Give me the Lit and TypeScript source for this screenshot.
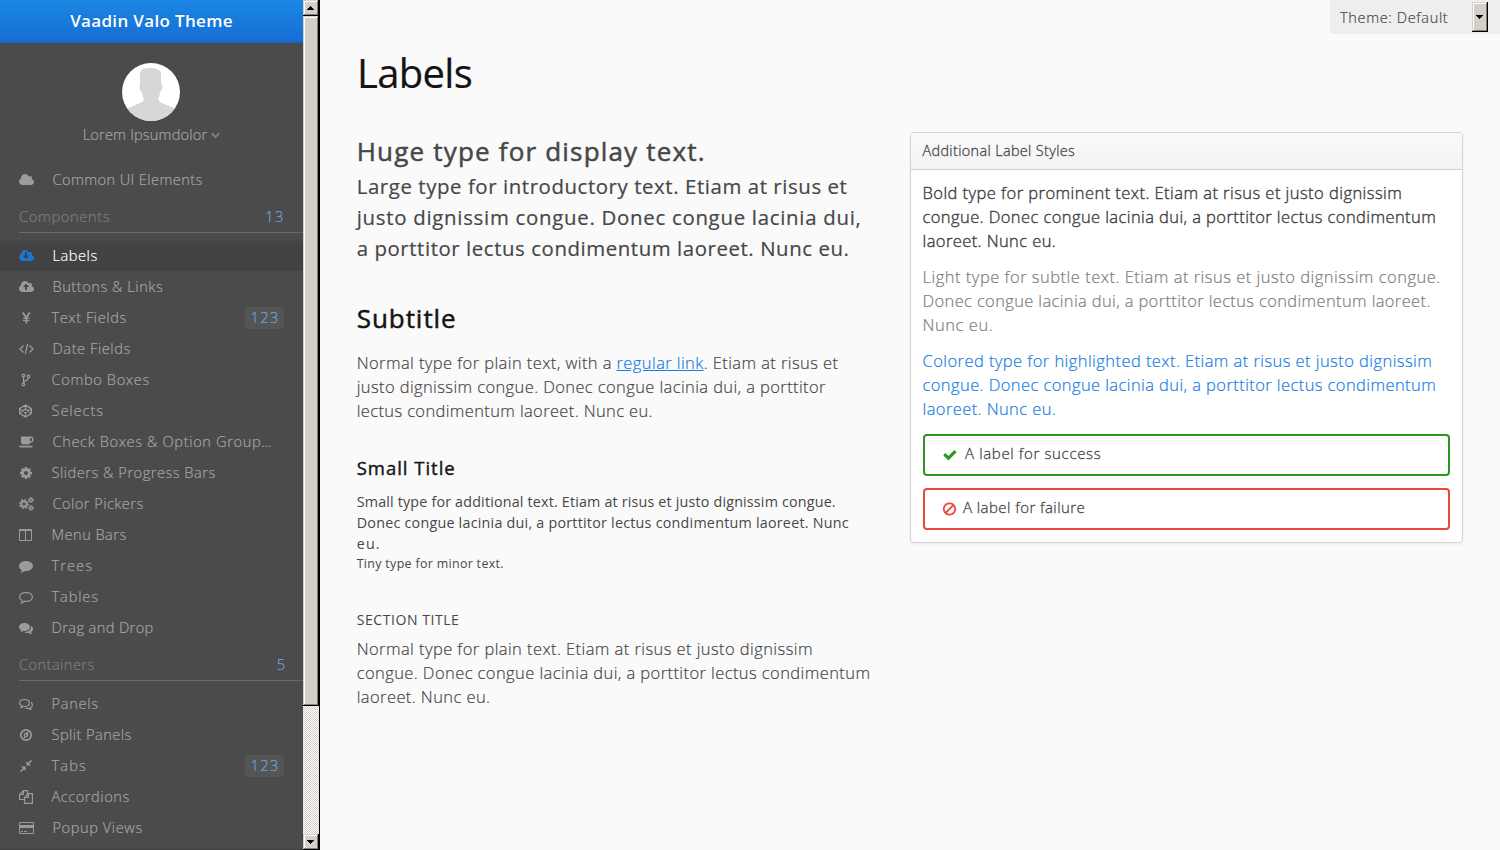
import { LitElement, html, css, svg } from "lit";
import { customElement, property, state } from "lit/decorators.js";
import { classMap } from "lit/directives/class-map.js";

/* One line of text tracked so that it fills the given measure. */
@customElement("text-line")
class TextLine extends LitElement {
  @property({ type: Number }) measure = 0;
  @state() private tracking = 0;
  static styles = css`
    :host { display: block; white-space: nowrap; }
  `;
  firstUpdated() {
    const box = this.renderRoot.querySelector("span")!;
    const chars = (this.textContent || "").trim().length;
    const natural = box.getBoundingClientRect().width;
    if (this.measure && chars > 1) this.tracking = (this.measure - natural) / (chars - 0.5);
  }
  render() {
    return html`<span style="letter-spacing:${this.tracking.toFixed(3)}px"><slot></slot></span>`;
  }
}

const fa = (d: string, dx = 0) =>
  svg`<g transform="translate(${dx} 0) scale(0.0078125)"><path d="${d}" fill="currentColor"/></g>`;
const CLOUD_BODY = "q0 159-112.5 271.5t-271.5 112.5h-1088q-185 0-316.5-131.5t-131.5-316.5q0-130 70-240t188-165q-2-30-2-43 0-212 150-362t362-150q156 0 285.5 87t188.5 231q71-62 166-62 106 0 181 75t75 181q0 76-41 138 130 31 213.5 135.5t83.5 238.5z";
const COG = "M1152 896q0-106-75-181t-181-75-181 75-75 181 75 181 181 75 181-75 75-181zm512-109v222q0 12-8 23t-20 13l-185 28q-19 54-39 91 35 50 107 138 10 12 10 25t-9 23q-27 37-99 108t-94 71q-12 0-26-9l-138-108q-44 23-91 38-16 136-29 186-7 28-36 28h-222q-14 0-24.5-8.5t-11.5-21.5l-28-184q-49-16-90-37l-141 107q-10 9-25 9-14 0-25-11-126-114-165-168-7-10-7-23 0-12 8-23 15-21 51-66.5t54-70.5q-27-50-41-99l-183-27q-13-2-21-12.5t-8-23.5v-222q0-12 8-23t19-13l186-28q14-46 39-92-40-57-107-138-10-12-10-24 0-10 9-23 26-36 98.5-107.5t94.5-71.5q13 0 26 10l138 107q44-23 91-38 16-136 29-186 7-28 36-28h222q14 0 24.5 8.5t11.5 21.5l28 184q49 16 90 37l142-107q9-9 24-9 13 0 25 10 129 119 165 170 7 8 7 22 0 12-8 23-15 21-51 66.5t-54 70.5q26 50 41 98l183 28q13 2 21 12.5t8 23.5z";
const CHECK = "M1671 566q0 40-28 68l-724 724-136 136q-28 28-68 28t-68-28l-136-136-362-362q-28-28-28-68t28-68l136-136q28-28 68-28t68 28l294 295 656-657q28-28 68-28t68 28l136 136q28 28 28 68z";

const ICONS: Record<string, unknown> = {
  cloud: fa("M1984 1152" + CLOUD_BODY, -0.5),
  cloudDown: fa("M1344 864q0-14-9-23t-23-9h-224v-352q0-13-9.500-22.500t-22.500-9.500h-192q-13 0-22.500 9.500t-9.500 22.500v352h-224q-13 0-22.500 9.500t-9.500 22.500q0 14 9 23l352 352q9 9 23 9t23-9l351-351q10-12 10-24zm640 288" + CLOUD_BODY, -0.5),
  cloudUp: fa("M1344 864q0-14-9-23l-352-352q-9-9-23-9t-23 9l-351 351q-10 12-10 24 0 14 9 23t23 9h224v352q0 13 9.5 22.5t22.5 9.5h192q13 0 22.5-9.5t9.5-22.5v-352h224q13 0 22.5-9.5t9.5-22.5zm640 288" + CLOUD_BODY, -0.5),
  yen: svg`<g class="s w18"><path d="M3.800 1.500L7.250 7L10.700 1.500M7.250 7V12.500"/><path class="w1" d="M4 7.500H10.500M4 9.500H10.500"/></g>`,
  code: svg`<g class="s w12"><path d="M4.500 3.500L1 7L4.500 10.500M10.500 3.500L14 7L10.500 10.500M8.700 2L6.300 12"/></g>`,
  fork: svg`<g class="s w12"><circle cx="4.500" cy="2.500" r="1.300"/><circle cx="4.500" cy="11.500" r="1.300"/><circle cx="9.500" cy="3.500" r="1.300"/><path d="M4.500 4V10M9.500 5C9.500 7.800 4.800 7 4.600 9.800"/></g>`,
  codepen: svg`<g class="s w12"><path d="M6.500 .9L12.400 4.700V9.300L6.500 13.100L.6 9.300V4.700ZM.6 4.700L6.500 8.900L12.400 4.700M.6 9.300L6.500 5.100L12.400 9.300M6.500 .9V5.100M6.500 8.900V13.100"/></g>`,
  coffee: svg`<path fill="currentColor" fill-rule="evenodd" d="M2 1.500H11.500A3 3 0 0 1 11.500 7.700H11A2 2 0 0 1 9 9.500H4.500A2.500 2.500 0 0 1 2 7ZM11 3V6.200H11.500A1.500 1.500 0 0 0 11.500 3ZM0 10.800H14A2.500 1.800 0 0 1 12.500 12.500H1.500A2.500 1.800 0 0 1 0 10.800Z"/>`,
  cog: fa(COG),
  cogs: svg`<g fill="none" stroke="currentColor"><circle cx="5" cy="7" r="2.700" stroke-width="1.900"/><circle cx="5" cy="7" r="4.300" stroke-width="1.500" stroke-dasharray="1.700 1.677"/><circle cx="12" cy="3" r="1.500" stroke-width="1.300"/><circle cx="12" cy="3" r="2.500" stroke-width=".9" stroke-dasharray="1 .963"/><circle cx="12" cy="11" r="1.500" stroke-width="1.300"/><circle cx="12" cy="11" r="2.500" stroke-width=".9" stroke-dasharray="1 .963"/></g>`,
  columns: svg`<path fill="currentColor" fill-rule="evenodd" d="M1 1H12A1 1 0 0 1 13 2V12A1 1 0 0 1 12 13H1A1 1 0 0 1 0 12V2A1 1 0 0 1 1 1ZM1 3V12H6V3ZM7 3V12H12V3Z"/>`,
  comment: svg`<path fill="currentColor" d="M7 2C11 2 14 4.200 14 7S11 12 7 12L5.800 11.900C4.500 13 3 13.500 1.300 13.600C2 13 2.600 12.300 2.700 11C1 10 0 8.600 0 7C0 4.200 3 2 7 2Z"/>`,
  commentO: svg`<path class="s w12" d="M7 2.600C10.700 2.600 13.400 4.500 13.400 7S10.700 11.400 7 11.400L5.800 11.300C4.700 12.300 3.600 12.700 2.400 13C3 12.300 3.300 11.600 3.300 10.700C1.500 9.800 .6 8.500 .6 7C.6 4.500 3.300 2.600 7 2.600Z"/>`,
  comments: svg`<g fill="currentColor"><path d="M5.500 2C8.600 2 11 3.800 11 6S8.600 10 5.500 10L4.500 9.900C3.500 10.700 2.400 11 1.200 11C1.700 10.500 2 10 2.100 9.200C.8 8.400 0 7.300 0 6C0 3.800 2.400 2 5.500 2Z"/><path d="M12 4.800C13.200 5.500 14 6.600 14 7.900C14 9.200 13.200 10.300 12 11C12.100 11.800 12.500 12.400 13 13C11.500 13 10.400 12.500 9.500 11.900C7.800 12.100 6.300 11.800 5.200 11.100C9 11.100 12 9 12 6Z"/></g>`,
  commentsO: svg`<path class="s w12" d="M5.500 2.500C8.300 2.500 10.400 4 10.400 6S8.300 9.500 5.500 9.500L4.400 9.400C3.500 10 2.800 10.300 2 10.400C2.400 9.900 2.600 9.500 2.700 8.900C1.300 8.200 .6 7.200 .6 6C.6 4 2.700 2.500 5.500 2.500Z"/><path fill="currentColor" d="M12 4.800C13.200 5.500 14 6.600 14 7.900C14 9.200 13.200 10.300 12 11C12.100 11.800 12.500 12.400 13 13C11.500 13 10.400 12.500 9.500 11.900C7.800 12.100 6.300 11.800 5.200 11.100L7.500 10.800C10.500 11.500 13 9.800 12.800 7.800C12.700 6.800 12.200 6.300 11.700 5.900Z"/>`,
  compass: svg`<circle class="s" cx="7" cy="7" r="5.200" stroke-width="1.700"/><path fill="currentColor" fill-rule="evenodd" d="M9.200 3.500V8.200L4.800 10.500V5.800ZM6 6.500V8.800L7.300 8V5.900Z"/>`,
  compress: svg`<path fill="currentColor" d="M7.500 6.600V2L9.200 3.700L12 .9L13.100 2L10.300 4.800L12 6.600ZM6.600 7.500V12L4.900 10.300L2.100 13.100L1 12L3.800 9.200L2 7.500Z"/>`,
  copy: svg`<g class="s w12"><path d="M5.500 9.500H.6V4.500L4.500 .6H8.500V3.800M4.500 .6V4.500H.6M5.500 7.500L9.400 3.600H13.400V13.400H5.500ZM9.400 3.600V7.500H5.500"/></g>`,
  card: svg`<path fill="currentColor" fill-rule="evenodd" d="M1 1H14A1 1 0 0 1 15 2V12A1 1 0 0 1 14 13H1A1 1 0 0 1 0 12V2A1 1 0 0 1 1 1ZM1 2V4H14V2ZM1 7V12H14V7ZM2 10H4V11H2ZM5 10H8V11H5Z"/>`,
};
const icon = (name: string) =>
  html`<svg class="icon" width="16" height="14" viewBox="0 0 16 14">${ICONS[name]}</svg>`;

interface Item { icon: string; label: string; end: number; x?: number; badge?: string }
const COMPONENTS: Item[] = [
  { icon: "cloudDown", label: "Labels", end: 97, x: 53 },
  { icon: "cloudUp", label: "Buttons & Links", end: 162.5, x: 53 },
  { icon: "yen", label: "Text Fields", end: 126, badge: "123" },
  { icon: "code", label: "Date Fields", end: 130, x: 53 },
  { icon: "fork", label: "Combo Boxes", end: 149 },
  { icon: "codepen", label: "Selects", end: 103 },
  { icon: "coffee", label: "Check Boxes & Option Group…", end: 271.5, x: 53 },
  { icon: "cog", label: "Sliders & Progress Bars", end: 215 },
  { icon: "cogs", label: "Color Pickers", end: 143, x: 53 },
  { icon: "columns", label: "Menu Bars", end: 126 },
  { icon: "comment", label: "Trees", end: 92 },
  { icon: "commentO", label: "Tables", end: 98 },
  { icon: "comments", label: "Drag and Drop", end: 153 },
];
const CONTAINERS: Item[] = [
  { icon: "commentsO", label: "Panels", end: 98 },
  { icon: "compass", label: "Split Panels", end: 131 },
  { icon: "compress", label: "Tabs", end: 86, badge: "123" },
  { icon: "copy", label: "Accordions", end: 129 },
  { icon: "card", label: "Popup Views", end: 142, x: 53 },
];

@customElement("app-root")
class AppRoot extends LitElement {
  @state() private selected = "Labels";
  static styles = css`
    :host {
      display: flex; height: 850px; overflow: hidden; position: relative; background: #fafafa;
      font: 300 16.500px/24px "Open Sans", sans-serif; color: #474747; -webkit-text-stroke: .2px;
    }
    * { box-sizing: border-box; }
    h1, h2, h3, h4, p { margin: 0; }
    .s { fill: none; stroke: currentColor; }
    .w12 { stroke-width: 1.2; } .w18 { stroke-width: 1.8; } .w1 { stroke-width: 1.1; }
    .icon { display: block; flex: none; overflow: visible; }

    .menu { width: 303px; height: 850px; flex: none; overflow: hidden; background: #4b4b4b;
      color: #a5a5a5; font-size: 14.600px; box-shadow: inset 0 -2px 2px -1px #3c3c3c; }
    .brand { height: 43px; display: flex; justify-content: center; background: linear-gradient(#1b87e3, #166dd5);
      border-bottom: 1px solid #1362bb; color: #fff; font: 600 17px/42px "Open Sans", sans-serif;
      text-shadow: 0 -1px 0 rgba(0,0,0,.1); -webkit-text-stroke: 0; }
    .user { height: 121px; padding-top: 20px; display: flex; flex-direction: column; align-items: center; }
    .avatar { width: 58px; height: 58px; border-radius: 50%; overflow: hidden; background: #fff; display: block; margin-right: 1px; }
    .name { display: flex; align-items: center; line-height: 26px; gap: 4px; }
    .name svg { margin-top: 2px; color: #7d7d7d; }
    .item { height: 31px; display: flex; align-items: center; padding: 0 19px; line-height: 31px; cursor: pointer; }
    .item .icon { color: #9b9b9b; margin-right: 16.500px; }
    .item.wide .icon { margin-right: 17.500px; }
    .item.on { background: linear-gradient(#464646, #424242 20%, #424242); color: #fff; }
    .item.on .icon { color: #1d76d3; }
    .badge { margin-left: auto; width: 39px; height: 22px; border-radius: 4px; background: #555; color: #6fa5dc;
      line-height: 21px; padding-left: 5.500px; }
    .group { height: 38px; margin: 0 0 7px 19px; padding: 6px 18px 0 0; border-bottom: 1px solid #6a6a6a;
      display: flex; justify-content: space-between; color: #7e7e7e; line-height: 31px; }
    .group .count { color: #6fa5dc; }

    .scroll { width: 17px; height: 850px; flex: none; display: flex; flex-direction: column; border-right: 1px solid #000;
      background: repeating-conic-gradient(#d4d0c8 0 25%, #fff 0 50%) 0 0 / 2px 2px; }
    .knob { background: #d4d0c8; height: 16px; display: flex; align-items: center; justify-content: center;
      box-shadow: inset -1px -1px #000, inset 1px 1px #d4d0c8, inset -2px -2px #808080, inset 2px 2px #fff; }
    .thumb { height: 690px; margin-bottom: 128px; }

    .page { flex: 1; padding: 48px 37px 0 36px; }
    h1 { font: 400 40px/50px "Open Sans", sans-serif; color: #141414; height: 83px; padding-left: 1px; }
    .cols { display: grid; grid-template-columns: 516px 553px; gap: 38px; align-items: start; }
    .left { padding-left: .7px; }
    .huge { font: 400 26px/40px "Open Sans", sans-serif; -webkit-text-stroke: .5px; }
    .large { font: 400 20.400px/31px "Open Sans", sans-serif; }
    h2 { font: 400 26px/30px "Open Sans", sans-serif; color: #141414; margin: 39px 0 18px; -webkit-text-stroke: .5px; }
    h3 { font: 400 18.500px/24px "Open Sans", sans-serif; color: #141414; margin: 33px 0 11px; -webkit-text-stroke: .4px; }
    .small { font: 400 14.300px/21px "Open Sans", sans-serif; -webkit-text-stroke: 0; }
    .tiny { font: 400 12.400px/19px "Open Sans", sans-serif; -webkit-text-stroke: 0; }
    h4 { font: 400 14px/20px "Open Sans", sans-serif; margin: 37px 0 7px; -webkit-text-stroke: 0; }
    a { color: #197de1; text-decoration: underline; }

    .panel { margin-top: 1px; height: 411px; border: 1px solid #d3d3d3; border-radius: 4px; background: #fff;
      box-shadow: 0 2px 3px rgba(0,0,0,.05); }
    .caption { height: 37px; line-height: 36px; padding-left: 11.500px; border-bottom: 1px solid #d3d3d3; font-size: 14.400px;
      background: linear-gradient(#fafafa, #f3f3f3); border-radius: 3px 3px 0 0; -webkit-text-stroke: .3px; }
    .body { padding: 11px 12px 12px; display: flex; flex-direction: column; gap: 12px; }
    .body p { margin-left: -.5px; }
    .strong { -webkit-text-stroke: .4px #404040; }
    .subtle { color: #7d7d7d; }
    .accent { color: #197de1; }
    .note { height: 42px; border: 2px solid; border-radius: 4px; display: flex; align-items: center; font-size: 15px; padding: 0 0 2px 17px; }
    .note text-line { color: #474747; margin-top: -2px; -webkit-text-stroke: .3px; }
    .ok { color: #2c9720; margin-top: 1px; } .bad { color: #ed473b; }
    .ok .icon { margin: 1px 6px 0 1px; } .bad .icon { margin: 1px 5px 0 0; }

    .theme { position: absolute; right: 0; top: 0; width: 170px; height: 34px; background: #eee; border-radius: 0 0 0 4px;
      display: flex; align-items: center; justify-content: space-between; padding: 0 12px 0 10px; font-size: 14.600px; }
    .theme .knob { width: 16px; height: 30px; }
  `;

  private item(i: Item) {
    return html`<div class=${classMap({ item: true, wide: i.x === 53, on: i.label === this.selected })}
      @click=${() => (this.selected = i.label)}>
      ${icon(i.icon)}<text-line measure=${i.end - (i.x ?? 52) + 1}>${i.label}</text-line>
      ${i.badge ? html`<span class="badge"><text-line measure="28.500">${i.badge}</text-line></span>` : ""}
    </div>`;
  }
  private lines(cls: string, left: number, rows: [string, number][]) {
    return html`<p class=${cls}>${rows.map(([t, end]) => html`<text-line measure=${end - left - 0.5}>${t}</text-line>`)}</p>`;
  }
  private arrow(up = false) {
    return html`<svg width="8" height="4" viewBox="0 0 8 4" shape-rendering="crispEdges"><path d=${up ? "M3 0h1v1h1v1h1v1h1v1H0V3h1V2h1V1h1z" : "M0 0h7v1H6v1H5v1H4v1H3V3H2V2H1V1H0z"}/></svg>`;
  }

  render() {
    return html`
      <nav class="menu">
        <div class="brand"><text-line measure="162.500">Vaadin Valo Theme</text-line></div>
        <div class="user">
          <svg class="avatar" viewBox="0 0 58 58"><path fill="#d7d7d7" d="M18 11C18 6 22 5 29 5Q34 5 35 6.500Q38.500 7 39 10V20Q41 22 40 26Q39 29 38 29Q38 33 36 36Q37 39 40 40L54 46V58H4V46L18 40Q21 39 22 36Q20 33 20 29Q18 29 17.500 25Q17 22 18 20Z"/></svg>
          <div class="name"><text-line measure="124.500">Lorem Ipsumdolor</text-line>
            <svg width="9" height="7" viewBox="0 0 9 7"><path class="s" stroke-width="2" d="M.8 1.300L4.500 5L8.200 1.300"/></svg></div>
        </div>
        ${this.item({ icon: "cloud", label: "Common UI Elements", end: 202, x: 53 })}
        <div class="group"><text-line measure="91">Components</text-line><text-line class="count" measure="19">13</text-line></div>
        ${COMPONENTS.map((i) => this.item(i))}
        <div class="group"><text-line measure="75.500">Containers</text-line><text-line class="count">5</text-line></div>
        ${CONTAINERS.map((i) => this.item(i))}
      </nav>
      <div class="scroll">
        <div class="knob">${this.arrow(true)}</div><div class="knob thumb"></div><div class="knob">${this.arrow()}</div>
      </div>
      <main class="page">
        <h1><text-line measure="115.500">Labels</text-line></h1>
        <div class="cols">
          <section class="left">
            ${this.lines("huge", 356, [["Huge type for display text.", 705]])}
            ${this.lines("large", 356, [["Large type for introductory text. Etiam at risus et", 847], ["justo dignissim congue. Donec congue lacinia dui,", 861], ["a porttitor lectus condimentum laoreet. Nunc eu.", 849]])}
            <h2><text-line measure="99.500">Subtitle</text-line></h2>
            <p><text-line measure="481.500">Normal type for plain text, with a <a href="#">regular link</a>. Etiam at risus et</text-line>
              <text-line measure="469">justo dignissim congue. Donec congue lacinia dui, a porttitor</text-line>
              <text-line measure="296">lectus condimentum laoreet. Nunc eu.</text-line></p>
            <h3><text-line measure="98.500">Small Title</text-line></h3>
            ${this.lines("small", 356, [["Small type for additional text. Etiam at risus et justo dignissim congue.", 835.5], ["Donec congue lacinia dui, a porttitor lectus condimentum laoreet. Nunc", 848.5], ["eu.", 380]])}
            ${this.lines("tiny", 356, [["Tiny type for minor text.", 503.5]])}
            <h4><text-line measure="102.500">SECTION TITLE</text-line></h4>
            ${this.lines("", 356, [["Normal type for plain text. Etiam at risus et justo dignissim", 812.5], ["congue. Donec congue lacinia dui, a porttitor lectus condimentum", 870], ["laoreet. Nunc eu.", 490]])}
          </section>
          <section class="panel">
            <div class="caption"><text-line measure="152.500">Additional Label Styles</text-line></div>
            <div class="body">
              ${this.lines("strong", 922, [["Bold type for prominent text. Etiam at risus et justo dignissim", 1402], ["congue. Donec congue lacinia dui, a porttitor lectus condimentum", 1436], ["laoreet. Nunc eu.", 1056]])}
              ${this.lines("subtle", 922, [["Light type for subtle text. Etiam at risus et justo dignissim congue.", 1440.5], ["Donec congue lacinia dui, a porttitor lectus condimentum laoreet.", 1430.5], ["Nunc eu.", 993]])}
              ${this.lines("accent", 922, [["Colored type for highlighted text. Etiam at risus et justo dignissim", 1432], ["congue. Donec congue lacinia dui, a porttitor lectus condimentum", 1436], ["laoreet. Nunc eu.", 1056]])}
              <div class="note ok"><svg class="icon" width="16" height="14" viewBox="0.5 0.500 15 13">${fa(CHECK)}</svg><text-line measure="136">A label for success</text-line></div>
              <div class="note bad"><svg class="icon" width="16" height="14" viewBox="0 0 16 14"><path class="s" stroke-width="1.800" d="M7.500 1.300A5.700 5.700 0 1 0 7.510 1.300ZM3.500 11L11.500 3"/></svg><text-line measure="122">A label for failure</text-line></div>
            </div>
          </section>
        </div>
      </main>
      <div class="theme"><text-line measure="108">Theme: Default</text-line><div class="knob">${this.arrow()}</div></div>
    `;
  }
}
